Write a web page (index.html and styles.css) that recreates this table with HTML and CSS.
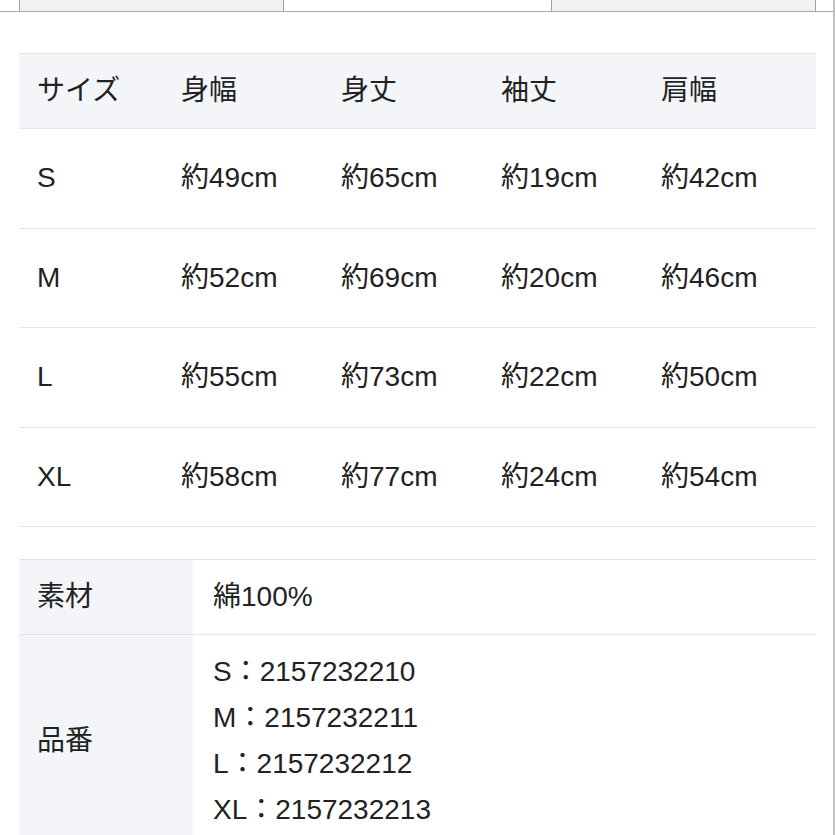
FILE: index.html
```html
<!DOCTYPE html>
<html lang="ja">
<head>
<meta charset="utf-8">
<title>サイズ表</title>
<link rel="stylesheet" href="styles.css">
</head>
<body>
<div class="page">
  <div class="tabs">
    <div class="tab-spacer"></div>
    <div class="tab tab-gray"></div>
    <div class="tab tab-white"></div>
    <div class="tab tab-gray"></div>
    <div class="tab-rest"></div>
  </div>
  <div class="content">
    <div class="size-table">
      <div class="row head">
        <div class="cell">サイズ</div><div class="cell">身幅</div><div class="cell">身丈</div><div class="cell">袖丈</div><div class="cell">肩幅</div>
      </div>
      <div class="row">
        <div class="cell">S</div><div class="cell">約49cm</div><div class="cell">約65cm</div><div class="cell">約19cm</div><div class="cell">約42cm</div>
      </div>
      <div class="row">
        <div class="cell">M</div><div class="cell">約52cm</div><div class="cell">約69cm</div><div class="cell">約20cm</div><div class="cell">約46cm</div>
      </div>
      <div class="row">
        <div class="cell">L</div><div class="cell">約55cm</div><div class="cell">約73cm</div><div class="cell">約22cm</div><div class="cell">約50cm</div>
      </div>
      <div class="row">
        <div class="cell">XL</div><div class="cell">約58cm</div><div class="cell">約77cm</div><div class="cell">約24cm</div><div class="cell">約54cm</div>
      </div>
    </div>
    <div class="spec-table">
      <div class="spec-row">
        <div class="spec-label">素材</div>
        <div class="spec-value">綿100%</div>
      </div>
      <div class="spec-row">
        <div class="spec-label">品番</div>
        <div class="spec-value">
          <div>S：2157232210</div>
          <div>M：2157232211</div>
          <div>L：2157232212</div>
          <div>XL：2157232213</div>
        </div>
      </div>
    </div>
  </div>
</div>
</body>
</html>
```

FILE: styles.css
```css
html, body {
  margin: 0;
  padding: 0;
  background: #ffffff;
}
body {
  font-family: "Liberation Sans", Arial, "Noto Sans CJK JP", sans-serif;
  color: #222222;
  font-size: 28px;
}
.page {
  min-height: 835px;
  border-right: 2px solid #c4c4c4;
  box-sizing: border-box;
  overflow: hidden;
}
.tabs {
  display: flex;
  height: 11px;
  border-bottom: 1px solid #a9a9a9;
}
.tab-spacer {
  width: 19px;
}
.tab {
  box-sizing: border-box;
  height: 11px;
}
.tab-gray {
  background: #f1f1f1;
  border-left: 1px solid #a0a0a0;
  border-right: 1px solid #a0a0a0;
  width: 265px;
}
.tab-white {
  width: 267px;
  background: #ffffff;
}
.tab-rest {
  flex: 1;
}
.content {
  padding: 41px 17px 0 19px;
}
.size-table {
  border-top: 1px solid #e3e3e3;
}
.row {
  display: grid;
  grid-template-columns: 144px 160px 160px 160px 1fr;
  border-bottom: 1px solid #e6e6e6;
}
.cell {
  padding: 26px 0 26.5px 18px;
  line-height: 46px;
  white-space: nowrap;
}
.head {
  background: #f3f5f8;
}
.head .cell {
  padding-top: 14px;
  padding-bottom: 14px;
}
.spec-table {
  margin-top: 32px;
  border-top: 1px solid #e3e3e3;
}
.spec-row {
  display: grid;
  grid-template-columns: 174px 1fr;
  border-bottom: 1px solid #e3e3e3;
}
.spec-label {
  background: #f3f5f8;
  padding: 14px 18px;
  line-height: 46px;
  display: flex;
  align-items: center;
}
.spec-value {
  padding: 14px 20px;
  line-height: 46px;
}
```
